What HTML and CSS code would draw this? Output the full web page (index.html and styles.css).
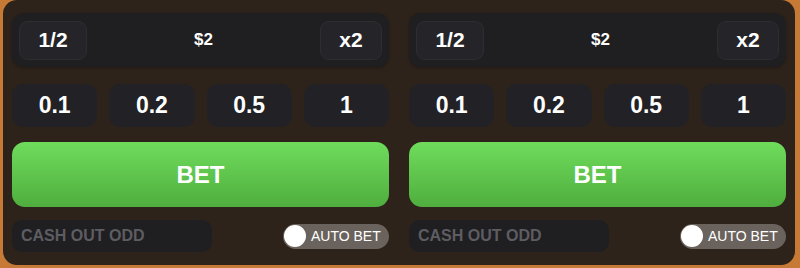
FILE: index.html
```html
<!DOCTYPE html>
<html>
<head>
<meta charset="utf-8">
<link rel="stylesheet" href="styles.css">
</head>
<body>
<div class="panel">
  <div class="col">
    <div class="amount">
      <div class="abtn half">1/2</div>
      <div class="value">$2</div>
      <div class="abtn dbl">x2</div>
    </div>
    <div class="quick">
      <div class="q">0.1</div>
      <div class="q">0.2</div>
      <div class="q">0.5</div>
      <div class="q">1</div>
    </div>
    <div class="bet">BET</div>
    <div class="bottom">
      <div class="cash">CASH OUT ODD</div>
      <div class="auto"><span class="knob"></span><span class="alabel">AUTO BET</span></div>
    </div>
  </div>
  <div class="col">
    <div class="amount">
      <div class="abtn half">1/2</div>
      <div class="value">$2</div>
      <div class="abtn dbl">x2</div>
    </div>
    <div class="quick">
      <div class="q">0.1</div>
      <div class="q">0.2</div>
      <div class="q">0.5</div>
      <div class="q">1</div>
    </div>
    <div class="bet">BET</div>
    <div class="bottom">
      <div class="cash">CASH OUT ODD</div>
      <div class="auto"><span class="knob"></span><span class="alabel">AUTO BET</span></div>
    </div>
  </div>
</div>
</body>
</html>
```
FILE: styles.css
```css
html, body {
  margin: 0;
  padding: 0;
  width: 800px;
  height: 268px;
  overflow: hidden;
  background: #c67a36;
  font-family: "Liberation Sans", Arial, sans-serif;
}
.panel {
  margin-left: 3px;
  width: 774px;
  height: 252px;
  padding: 13px 9px 0 9px;
  background: #2e231b;
  border-radius: 0 14px 14px 14px;
  display: flex;
  gap: 20px;
  border-top-left-radius: 14px;
}
.col {
  width: 377px;
  display: flex;
  flex-direction: column;
}
.amount {
  height: 54px;
  background: #1f1e21;
  border-radius: 12px;
  display: flex;
  align-items: center;
  justify-content: space-between;
  padding: 0 7px;
  box-shadow: 0 1px 3px rgba(0,0,0,0.3);
}
.abtn {
  height: 37px;
  background: #252428;
  border: 1px solid #2e2d31;
  border-radius: 9px;
  color: #fff;
  font-weight: bold;
  font-size: 21px;
  display: flex;
  align-items: center;
  justify-content: center;
}
.half { width: 66px; }
.dbl { width: 60px; }
.value {
  color: #fff;
  font-weight: bold;
  font-size: 17px;
}
.quick {
  margin-top: 17px;
  height: 43px;
  display: grid;
  grid-template-columns: repeat(4, 1fr);
  gap: 12px;
}
.q {
  background: #222125;
  border-radius: 11px;
  color: #fff;
  font-weight: bold;
  font-size: 23px;
  display: flex;
  align-items: center;
  justify-content: center;
}
.bet {
  margin-top: 15px;
  height: 65px;
  border-radius: 13px;
  background: linear-gradient(to bottom, #6fdc5c, #4fae3e);
  color: #fff;
  font-weight: bold;
  font-size: 24px;
  display: flex;
  align-items: center;
  justify-content: center;
}
.bottom {
  margin-top: 13px;
  display: flex;
  align-items: center;
  justify-content: space-between;
}
.cash {
  width: 191px;
  height: 32px;
  padding-left: 9px;
  background: #1f1e21;
  border-radius: 10px;
  color: #5d5d61;
  font-weight: bold;
  font-size: 16px;
  display: flex;
  align-items: center;
}
.auto {
  width: 106px;
  height: 25px;
  background: #6a625c;
  border-radius: 13px;
  display: flex;
  align-items: center;
  box-sizing: border-box;
  padding-left: 1px;
}
.knob {
  width: 22px;
  height: 22px;
  border-radius: 50%;
  background: #fff;
}
.alabel {
  margin-left: 5px;
  color: #fff;
  font-size: 14px;
}
```
